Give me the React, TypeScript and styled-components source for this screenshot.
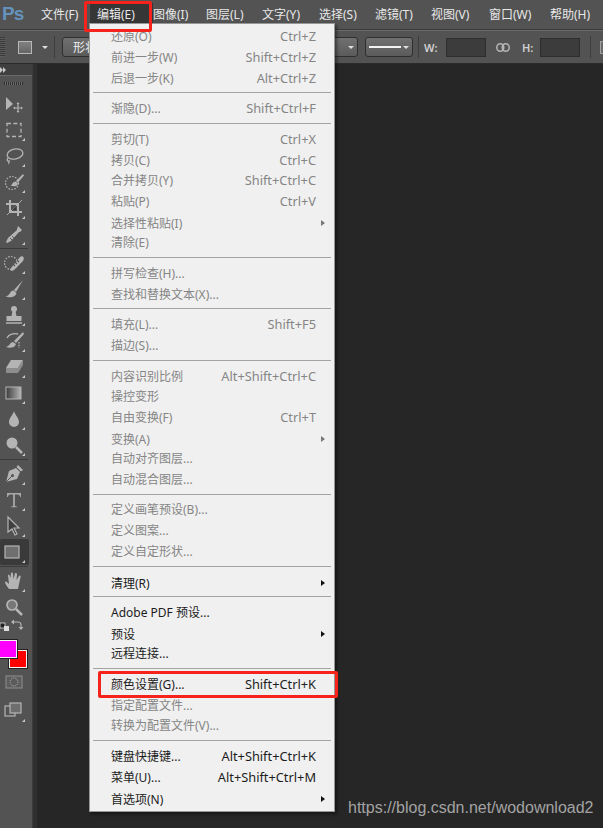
import React from "react";
import styled, { createGlobalStyle } from "styled-components";

const Global = createGlobalStyle`
  html, body { margin: 0; padding: 0; background: #262626; }
  body { font-family: "Noto Sans", "Noto Sans CJK SC", sans-serif; }
`;

const Page = styled.div`
  position: relative;
  width: 603px;
  height: 828px;
  overflow: hidden;
  display: flex;
  flex-direction: column;
  background: #262626;
`;

const MenuBar = styled.div`
  height: 29px;
  background: #535353;
  border-bottom: 1px solid #3a3a3a;
  display: flex;
  align-items: center;
  flex-shrink: 0;
`;
const Logo = styled.div`
  width: 41px;
  padding-left: 2px;
  box-sizing: border-box;
  font: bold 19px "Liberation Sans", sans-serif;
  letter-spacing: -1px;
  color: #6492bb;
  margin-top: -1px;
`;
const TopItem = styled.div<{ $w: number; $open?: boolean }>`
  width: ${p => p.$w}px;
  height: 23px;
  margin-top: -1px;
  display: flex;
  align-items: center;
  font-size: 12px;
  color: #e8e8e8;
  white-space: nowrap;
  padding-left: ${p => (p.$open ? 7 : 0)}px;
  box-sizing: border-box;
  background: ${p => (p.$open ? "#363636" : "transparent")};
`;

const OptionsBar = styled.div`
  height: 32px;
  background: #535353;
  border-top: 1px solid #6a6a6a;
  border-bottom: 1px solid #2b2b2b;
  display: flex;
  align-items: center;
  flex-shrink: 0;
  color: #d8d8d8;
  font-size: 12px;
`;
const Grip = styled.div`
  width: 5px;
  height: 20px;
  margin-right: 13px;
  flex-shrink: 0;
  background: repeating-linear-gradient(#3a3a3a 0 1px, #5c5c5c 1px 2px);
`;
const ShapeSwatch = styled.div`
  width: 12px;
  height: 11px;
  flex-shrink: 0;
  border: 1px solid #b8b8b8;
  background: linear-gradient(#808080, #666);
`;
const Caret = styled.span<{ $left: number; $color?: string }>`
  width: 0;
  height: 0;
  flex-shrink: 0;
  margin-left: ${p => p.$left}px;
  border-left: 3px solid transparent;
  border-right: 3px solid transparent;
  border-top: 3px solid ${p => p.$color || "#e0e0e0"};
`;
const BarDivider = styled.div<{ $left: number }>`
  width: 1px;
  height: 22px;
  margin-left: ${p => p.$left}px;
  background: #3d3d3d;
  flex-shrink: 0;
`;
const SelectButton = styled.div<{ $left: number; $w: number }>`
  width: ${p => p.$w}px;
  height: 20px;
  margin-left: ${p => p.$left}px;
  flex-shrink: 0;
  box-sizing: border-box;
  border: 1px solid #2f2f2f;
  border-radius: 3px;
  background: linear-gradient(#707070, #5b5b5b);
  display: flex;
  align-items: center;
  justify-content: flex-end;
  padding: 0 3px;
  color: #eee;
  font-size: 12px;
`;
const ShapeLabel = styled.span`
  flex: 1;
  padding-left: 7px;
  white-space: nowrap;
  overflow: hidden;
`;
const StrokeLine = styled.span`
  width: 33px;
  height: 2px;
  margin-right: 2px;
  background: #f2f2f2;
`;
const FieldLabel = styled.span<{ $left: number }>`
  margin-left: ${p => p.$left}px;
  font-size: 11px;
  font-weight: 600;
  width: 14px;
  flex-shrink: 0;
  color: #cfcfcf;
`;
const Field = styled.div<{ $left: number }>`
  width: 40px;
  height: 19px;
  margin-left: ${p => p.$left}px;
  flex-shrink: 0;
  background: #3c3c3c;
  border: 1px solid #2e2e2e;
  box-sizing: border-box;
`;
const LinkIcon = styled.svg`
  width: 14px;
  height: 9px;
  margin-left: 10px;
  flex-shrink: 0;
`;
const CheckStub = styled.div`
  width: 12px;
  height: 11px;
  margin-left: 9px;
  flex-shrink: 0;
  border: 1px solid #a0a0a0;
  background: #6a6a6a;
`;

const Workspace = styled.div`
  flex: 1;
  display: flex;
  min-height: 0;
`;
const ToolPanel = styled.div`
  width: 32px;
  flex-shrink: 0;
  background: #535353;
  display: flex;
  flex-direction: column;
`;
const PanelHeader = styled.div`
  height: 11px;
  background: #3f3f3f;
  border-bottom: 1px solid #6a6a6a;
  display: flex;
  align-items: center;
  flex-shrink: 0;
`;
const HeaderArrow = styled.span`
  width: 0;
  height: 0;
  border-top: 3px solid transparent;
  border-bottom: 3px solid transparent;
  border-left: 3px solid #c8c8c8;
`;
const PanelGrip = styled.div`
  height: 3px;
  margin: 6px 9px 5.5px 4px;
  flex-shrink: 0;
  background: repeating-linear-gradient(90deg, #2f2f2f 0 1px, #6a6a6a 1px 2px);
`;
const Tool = styled.div<{ $h?: number; $active?: boolean; $more?: boolean }>`
  position: relative;
  height: ${p => p.$h || 26}px;
  flex-shrink: 0;
  display: flex;
  align-items: center;
  justify-content: center;
  background: ${p => (p.$active ? "#3a3a3a" : "transparent")};
  border-radius: ${p => (p.$active ? "2px" : "0")};
  margin-right: ${p => (p.$active ? "3px" : "0")};
  &::after {
    content: "";
    display: ${p => (p.$more ? "block" : "none")};
    position: absolute;
    right: ${p => (p.$active ? 4 : 7)}px;
    bottom: 2px;
    border-left: 3px solid transparent;
    border-bottom: 3px solid #c8c8c8;
  }
  svg {
    width: 20px;
    height: 20px;
    margin-left: -5px;
    overflow: visible;
  }
`;
const ToolDivider = styled.div`
  height: 1px;
  margin: 1px 4px 1px 0;
  background: #3a3a3a;
  flex-shrink: 0;
`;
const ColorStack = styled.div`
  position: relative;
  height: 36px;
  flex-shrink: 0;
`;
const ColorChip = styled.div<{ $color: string; $x: number; $y: number; $w: number; $h: number }>`
  position: absolute;
  left: ${p => p.$x}px;
  top: ${p => p.$y}px;
  width: ${p => p.$w}px;
  height: ${p => p.$h}px;
  box-sizing: border-box;
  background: ${p => p.$color};
  border: 1.5px solid #f4f4f4;
  outline: 1px solid #222;
`;
const Gutter = styled.div`
  width: 5px;
  flex-shrink: 0;
  background: #2f2f2f;
  border-left: 1px solid #3c3c3c;
  box-sizing: border-box;
`;
const Canvas = styled.div`
  flex: 1;
  background: #262626;
`;

const Menu = styled.div`
  position: absolute;
  left: 89px;
  top: 23px;
  width: 246px;
  height: 789px;
  box-sizing: border-box;
  padding: 2px 0 0;
  background: #f0f0f0;
  border: 1px solid #979797;
  box-shadow: 2px 2px 3px rgba(0, 0, 0, 0.45);
  display: flex;
  flex-direction: column;
  z-index: 2;
`;
const Row = styled.div<{ $on?: boolean; $sub?: boolean }>`
  height: 20.67px;
  flex-shrink: 0;
  box-sizing: border-box;
  display: flex;
  align-items: center;
  justify-content: space-between;
  padding: ${p => (p.$sub ? 3 : 0)}px 18px 0 21px;
  font-size: 12px;
  white-space: nowrap;
  color: ${p => (p.$on ? "#1c1c1c" : "#858585")};
`;
const Shortcut = styled.span`
  font-size: 12.8px;
`;
const RowArrow = styled.span<{ $on?: boolean }>`
  margin-right: -9px;
  width: 0;
  height: 0;
  border-top: 3.5px solid transparent;
  border-bottom: 3.5px solid transparent;
  border-left: 4px solid ${p => (p.$on ? "#111" : "#777")};
`;
const Separator = styled.div`
  height: 1px;
  flex-shrink: 0;
  margin: 4.5px 3px;
  background: #a3a3a3;
`;

const RedBox = styled.div<{ $x: number; $y: number; $w: number; $h: number }>`
  position: absolute;
  left: ${p => p.$x}px;
  top: ${p => p.$y}px;
  width: ${p => p.$w}px;
  height: ${p => p.$h}px;
  box-sizing: border-box;
  border: 3px solid #f5231b;
  border-radius: 2px;
  z-index: 3;
`;
const Watermark = styled.div`
  position: absolute;
  left: 348px;
  top: 799px;
  font: 16px "Liberation Sans", sans-serif;
  color: #a3a3a3;
  z-index: 3;
`;

const topItems: [string, number][] = [
  ["文件(F)", 49],
  ["编辑(E)", 63],
  ["图像(I)", 53],
  ["图层(L)", 56],
  ["文字(Y)", 57],
  ["选择(S)", 56],
  ["滤镜(T)", 56],
  ["视图(V)", 58],
  ["窗口(W)", 61],
  ["帮助(H)", 53],
];

type Item = { label: string; key?: string; on?: boolean; sub?: boolean } | null;
const menuItems: Item[] = [
  { label: "还原(O)", key: "Ctrl+Z" },
  { label: "前进一步(W)", key: "Shift+Ctrl+Z" },
  { label: "后退一步(K)", key: "Alt+Ctrl+Z" },
  null,
  { label: "渐隐(D)...", key: "Shift+Ctrl+F" },
  null,
  { label: "剪切(T)", key: "Ctrl+X" },
  { label: "拷贝(C)", key: "Ctrl+C" },
  { label: "合并拷贝(Y)", key: "Shift+Ctrl+C" },
  { label: "粘贴(P)", key: "Ctrl+V" },
  { label: "选择性粘贴(I)", sub: true },
  { label: "清除(E)" },
  null,
  { label: "拼写检查(H)..." },
  { label: "查找和替换文本(X)..." },
  null,
  { label: "填充(L)...", key: "Shift+F5" },
  { label: "描边(S)..." },
  null,
  { label: "内容识别比例", key: "Alt+Shift+Ctrl+C" },
  { label: "操控变形" },
  { label: "自由变换(F)", key: "Ctrl+T" },
  { label: "变换(A)", sub: true },
  { label: "自动对齐图层..." },
  { label: "自动混合图层..." },
  null,
  { label: "定义画笔预设(B)..." },
  { label: "定义图案..." },
  { label: "定义自定形状..." },
  null,
  { label: "清理(R)", on: true, sub: true },
  null,
  { label: "Adobe PDF 预设...", on: true },
  { label: "预设", on: true, sub: true },
  { label: "远程连接...", on: true },
  null,
  { label: "颜色设置(G)...", key: "Shift+Ctrl+K", on: true },
  { label: "指定配置文件..." },
  { label: "转换为配置文件(V)..." },
  null,
  { label: "键盘快捷键...", key: "Alt+Shift+Ctrl+K", on: true },
  { label: "菜单(U)...", key: "Alt+Shift+Ctrl+M", on: true },
  { label: "首选项(N)", on: true, sub: true },
];

const C = "#b4b4b4";
const icons: Record<string, React.ReactNode> = {
  move: (
    <svg viewBox="0 0 20 20">
      <path d="M2 3v13l7-6z" fill={C} />
      <path d="M14 9v9M10 14h8" stroke={C} strokeWidth="1.2" />
      <path d="M14 8l-1.5 2h3zM14 19l-1.5-2h3zM9 14l2-1.5v3zM19 14l-2-1.5v3z" fill={C} />
    </svg>
  ),
  marquee: (
    <svg viewBox="0 0 20 20">
      <rect x="3" y="3.5" width="14" height="13" fill="none" stroke={C} strokeWidth="1.3" strokeDasharray="4 2.4" />
    </svg>
  ),
  lasso: (
    <svg viewBox="0 0 20 20">
      <ellipse cx="11" cy="8" rx="8" ry="5" fill="none" stroke={C} strokeWidth="1.3" transform="rotate(-12 11 8)" />
      <path d="M4 12c-2 2 0 4 1 3s-1 2 0 3" fill="none" stroke={C} strokeWidth="1.3" />
    </svg>
  ),
  quick: (
    <svg viewBox="0 0 20 20">
      <circle cx="8" cy="11" r="6.5" fill="none" stroke={C} strokeWidth="1.2" strokeDasharray="1.6 1.4" />
      <path d="M19 2l-7 7 1.8 1.8L20 3.5z" fill={C} />
      <path d="M11.5 9.5c-3 0-3 3.5-5 4 2.5 1.5 7 1 7.5-2z" fill={C} />
    </svg>
  ),
  crop: (
    <svg viewBox="0 0 20 20">
      <path d="M6 2v12h12M2 6h12v12" fill="none" stroke={C} strokeWidth="2" />
      <path d="M3 17L18 2" stroke={C} strokeWidth="0.9" />
      <path d="M8 12l4-4v4z" fill="#3a3a3a" />
    </svg>
  ),
  dropper: (
    <svg viewBox="0 0 20 20">
      <path d="M14 2l4 4-2 2-1 0-8 9-4 2-1-1 2-4 9-8 0-1z" fill={C} />
      <path d="M6 14l2 2M8 12l2 2" stroke="#535353" strokeWidth="0.9" />
    </svg>
  ),
  heal: (
    <svg viewBox="0 0 20 20">
      <circle cx="7" cy="10" r="6.5" fill="none" stroke={C} strokeWidth="1.2" strokeDasharray="1.6 1.4" />
      <path d="M7 15L16 4c3-2 5 1 3 4l-9 9c-3 2-5 0-3-2z" fill={C} />
      <path d="M11 9l2 2M13 7l2 2M9 11l2 2" stroke="#535353" strokeWidth="1.1" />
    </svg>
  ),
  brush: (
    <svg viewBox="0 0 20 20">
      <path d="M19 1L10 11l2 2z" fill={C} />
      <path d="M9.5 11.5c-4 0-3 5-8 6 4 1.5 10 1 11-3.5z" fill={C} />
    </svg>
  ),
  stamp: (
    <svg viewBox="0 0 20 20">
      <circle cx="10" cy="4" r="3" fill={C} />
      <path d="M8.5 6h3l1 5h5v5h-15v-5h5z" fill={C} />
      <path d="M2 18h16" stroke={C} strokeWidth="1.5" />
    </svg>
  ),
  history: (
    <svg viewBox="0 0 20 20">
      <path d="M19 1l-9 9 2 2 8-9z" fill={C} />
      <path d="M9 11c-3 0-3 4-7 5 3 1.5 9 1 10-3z" fill={C} />
      <path d="M3 7c2-4 7-5 11-4" fill="none" stroke={C} strokeWidth="1.4" />
      <path d="M15 11v6" stroke={C} strokeWidth="1.3" strokeDasharray="1.5 1.2" />
    </svg>
  ),
  eraser: (
    <svg viewBox="0 0 20 20">
      <path d="M7 3h12l-5 8H2z" fill={C} />
      <path d="M2 11h12v5H2zM14 11l5-8v5l-5 8z" fill="#8d8d8d" />
    </svg>
  ),
  gradient: (
    <svg viewBox="0 0 20 20">
      <defs>
        <linearGradient id="toolGrad">
          <stop offset="0" stopColor="#3c3c3c" />
          <stop offset="1" stopColor="#b5b5b5" />
        </linearGradient>
      </defs>
      <rect x="2" y="4" width="15" height="12" fill="url(#toolGrad)" stroke={C} />
    </svg>
  ),
  drop: (
    <svg viewBox="0 0 20 20">
      <path d="M10 2c1 4 5 7 5 11a5 5 0 0 1-10 0c0-4 4-7 5-11z" fill={C} />
    </svg>
  ),
  dodge: (
    <svg viewBox="0 0 20 20">
      <circle cx="8" cy="8" r="5.5" fill={C} />
      <path d="M12 12l6 6" stroke={C} strokeWidth="2.5" />
    </svg>
  ),
  pen: (
    <svg viewBox="0 0 20 20">
      <path d="M12 4L5 7 2 18l11-3 3-7z" fill={C} />
      <path d="M2 18l6-6" stroke="#535353" strokeWidth="1" />
      <circle cx="8.5" cy="11.5" r="1.5" fill="#535353" />
      <path d="M14 1l5 5-2 1.5L12.5 3z" fill={C} />
    </svg>
  ),
  type: (
    <svg viewBox="0 0 20 20">
      <path d="M3 3h14v4h-.8c-.4-1.6-1-2.6-2.700-2.600h-2.600v11c0 .8.800 1.100 2.100 1.100v.8H7v-.8c1.300 0 2.100-.3 2.100-1.100v-11H6.500C4.800 4.400 4.200 5.400 3.800 7H3z" fill="#a8a8a8" />
    </svg>
  ),
  select: (
    <svg viewBox="0 0 20 20">
      <path d="M4 1v15l4-3 3 6 2-1-3-6h5z" fill="#3f3f3f" stroke={C} strokeWidth="1.2" />
    </svg>
  ),
  shape: (
    <svg viewBox="0 0 20 20">
      <rect x="3" y="4" width="14" height="12" fill="#6f6f6f" stroke={C} strokeWidth="1.2" />
    </svg>
  ),
  hand: (
    <svg viewBox="0 0 20 20">
      <path d="M5 18c-2-3-4-5-4-7 1-1 2 0 4 2L4 4c1-1 2 0 2.5 3L7 2c1-1 2 0 2 1l.5 5L11 2.500c1-1 2 0 2 1l-.5 5.500L15 5c1-1 2 0 1.500 1.500L15 13l-1 5z" fill={C} />
    </svg>
  ),
  zoom: (
    <svg viewBox="0 0 20 20">
      <circle cx="8" cy="8" r="5" fill="#777" stroke={C} strokeWidth="1.7" />
      <path d="M12 12l6 6" stroke={C} strokeWidth="2.5" />
    </svg>
  ),
  swap: (
    <svg viewBox="0 0 20 20">
      <rect x="-4" y="6" width="5" height="5" fill="#222" stroke="#ddd" strokeWidth="0.8" />
      <rect x="0" y="9" width="5" height="5" fill="#ddd" />
      <path d="M8 5h6c2 0 3 1 3 3v3" fill="none" stroke={C} strokeWidth="1.1" />
      <path d="M10 2.500L7 5l3 2.500zM14.500 10h5L17 13z" fill={C} />
    </svg>
  ),
  mask: (
    <svg viewBox="0 0 20 20">
      <rect x="2" y="4" width="16" height="12" fill="#5c5c5c" stroke="#8f8f8f" />
      <circle cx="10" cy="10" r="4" fill="none" stroke="#bbb" strokeDasharray="1 1.2" />
    </svg>
  ),
  screen: (
    <svg viewBox="0 0 20 20">
      <rect x="1" y="7" width="10" height="10" fill="none" stroke={C} strokeWidth="1.2" />
      <rect x="6" y="4" width="11" height="10" fill="#6e6e6e" stroke={C} strokeWidth="1.2" />
    </svg>
  ),
};

const App: React.FC = () => (
  <Page>
    <Global />
    <MenuBar>
      <Logo>Ps</Logo>
      {topItems.map(([label, w]) => (
        <TopItem key={label} $w={w} $open={label === "编辑(E)"}>
          {label}
        </TopItem>
      ))}
    </MenuBar>
    <OptionsBar>
      <Grip />
      <ShapeSwatch />
      <Caret $left={10} />
      <BarDivider $left={6} />
      <SelectButton $left={7} $w={214}>
        <ShapeLabel>形状</ShapeLabel>
      </SelectButton>
      <SelectButton $left={55} $w={27}>
        <Caret $left={0} />
      </SelectButton>
      <SelectButton $left={7} $w={48}>
        <StrokeLine />
        <Caret $left={0} />
      </SelectButton>
      <BarDivider $left={5} />
      <FieldLabel $left={5}>W:</FieldLabel>
      <Field $left={8} />
      <LinkIcon viewBox="0 0 14 9">
        <rect x="0.8" y="0.8" width="7" height="7.4" rx="3.7" fill="none" stroke="#b5b5b5" strokeWidth="1.5" />
        <rect x="6.2" y="0.8" width="7" height="7.4" rx="3.7" fill="none" stroke="#b5b5b5" strokeWidth="1.5" />
      </LinkIcon>
      <FieldLabel $left={12}>H:</FieldLabel>
      <Field $left={4} />
      <BarDivider $left={10} />
      <CheckStub />
    </OptionsBar>
    <Workspace>
      <ToolPanel>
        <PanelHeader>
          <HeaderArrow />
          <HeaderArrow />
        </PanelHeader>
        <PanelGrip />
        <Tool>{icons.move}</Tool>
        <Tool $more>{icons.marquee}</Tool>
        <Tool $more>{icons.lasso}</Tool>
        <Tool $more>{icons.quick}</Tool>
        <Tool $more>{icons.crop}</Tool>
        <Tool $more>{icons.dropper}</Tool>
        <ToolDivider />
        <Tool $more>{icons.heal}</Tool>
        <Tool $more>{icons.brush}</Tool>
        <Tool $more>{icons.stamp}</Tool>
        <Tool $more>{icons.history}</Tool>
        <Tool $more>{icons.eraser}</Tool>
        <Tool $more>{icons.gradient}</Tool>
        <Tool $more>{icons.drop}</Tool>
        <Tool $more>{icons.dodge}</Tool>
        <ToolDivider />
        <Tool $more>{icons.pen}</Tool>
        <Tool $more>{icons.type}</Tool>
        <Tool $more>{icons.select}</Tool>
        <Tool $active $more>{icons.shape}</Tool>
        <ToolDivider />
        <Tool $more>{icons.hand}</Tool>
        <Tool>{icons.zoom}</Tool>
        <Tool $h={14}>{icons.swap}</Tool>
        <ColorStack>
          <ColorChip $color="#ff0000" $x={9} $y={16} $w={18} $h={18} />
          <ColorChip $color="#ff00ff" $x={-2} $y={6} $w={19} $h={18} />
        </ColorStack>
        <Tool $h={24}>{icons.mask}</Tool>
        <Tool $h={30} $more>{icons.screen}</Tool>
      </ToolPanel>
      <Gutter />
      <Canvas />
    </Workspace>
    <Menu>
      {menuItems.map((item, i) =>
        item ? (
          <Row key={i} $on={item.on} $sub={item.sub}>
            <span>{item.label}</span>
            {item.key && <Shortcut>{item.key}</Shortcut>}
            {item.sub && <RowArrow $on={item.on} />}
          </Row>
        ) : (
          <Separator key={i} />
        )
      )}
    </Menu>
    <RedBox $x={84} $y={1} $w={68} $h={31} />
    <RedBox $x={98} $y={671} $w={240} $h={27} />
    <Watermark>https://blog.csdn.net/wodownload2</Watermark>
  </Page>
);

export default App;
